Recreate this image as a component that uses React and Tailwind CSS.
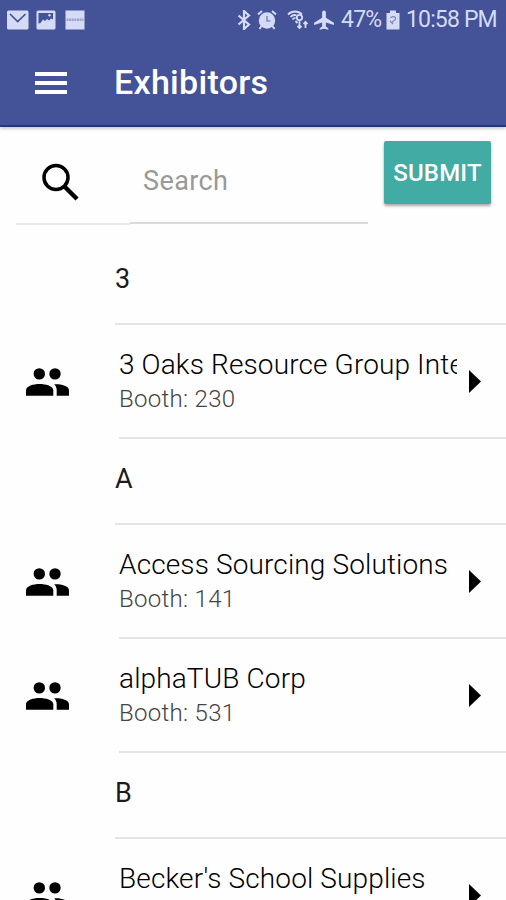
import React, { useState } from "react";

/* ================= DATA ================= */

const groups = [
  {
    letter: "3",
    items: [{ name: "3 Oaks Resource Group International", booth: "230" }],
  },
  {
    letter: "A",
    items: [
      { name: "Access Sourcing Solutions", booth: "141" },
      { name: "alphaTUB Corp", booth: "531" },
    ],
  },
  {
    letter: "B",
    items: [{ name: "Becker's School Supplies" }],
  },
];

/* ================= STATUS BAR ================= */

function StatusBar() {
  return (
    <div className="h-10 flex items-center text-[#d5dbf5]">
      <svg className="ml-[7px] w-[22px] h-5" viewBox="0 0 22 20">
        <rect x="0" y="0.5" width="21.5" height="19" rx="1.5" fill="currentColor" />
        <path d="M3 4l7.7 7.5L18.5 4" fill="none" stroke="#445298" strokeWidth="1.7" />
      </svg>
      <svg className="ml-[7px] w-5 h-5" viewBox="0 0 20 20">
        <rect x="0.5" y="0.5" width="19" height="19" rx="1.5" fill="currentColor" />
        <path
          d="M2.5 3h14.5v6.5l-2-1-2 2-2-1.5-2 2-2-1.5-2.5 3.5-2 .5z"
          fill="#445298"
        />
        <circle cx="13.5" cy="5.3" r="1.2" fill="currentColor" />
      </svg>
      <svg className="ml-[9px] w-5 h-5" viewBox="0 0 20 20">
        <rect x="0.5" y="0.5" width="19" height="19" fill="currentColor" />
        <path d="M1.5 9.7h17" stroke="#9ba1c8" strokeWidth="2.5" strokeDasharray="2 0.6" />
      </svg>

      <svg className="ml-[152px] w-[14px] h-5 shrink-0" viewBox="0 0 14 20">
        <path
          d="M1.5 5.5l10.5 9-5 4.5V1l5 4.500-10.500 9"
          fill="none"
          stroke="currentColor"
          strokeWidth="2.2"
        />
      </svg>
      <svg className="ml-[6px] w-5 h-5 shrink-0" viewBox="0 0 20 20">
        <circle cx="10" cy="10.5" r="8.2" fill="currentColor" />
        <path
          d="M1 4.5L5 1M19 4.5L15 1M4.5 16l-2 3M15.5 16l2 3"
          stroke="currentColor"
          strokeWidth="2"
        />
        <path d="M10 6v5h3.500" fill="none" stroke="#6470ab" strokeWidth="1.2" />
      </svg>
      <svg className="ml-[10px] w-[22px] h-5 shrink-0" viewBox="0 0 22 20">
        <g fill="none" stroke="currentColor" strokeWidth="1.8">
          <path d="M1 4.5c4-4 10-4 14 0M3.5 7c2-2.2 4-2.5 6-1.5M5.5 9.5c1-1.2 2-1.5 3-1.2" />
          <circle cx="12.5" cy="7.5" r="2.7" />
          <path d="M8.5 11l2 2M12.5 11v7M10.5 16l2 2 2-2M18.5 18v-6M16.5 14l2-2.2 2 2.2" />
        </g>
      </svg>
      <svg className="ml-[4px] w-[22px] h-5 shrink-0" viewBox="0 0 22 20">
        <path
          d="M11 .5c1.200 0 1.900 1 1.900 2.200v5l8 5v2.300l-8-2.500v4l2.400 1.800v1.500L11 18.700l-4.300 1.100v-1.500l2.400-1.800v-4l-8 2.500v-2.300l8-5v-5C9.100 1.500 9.800.5 11 .5z"
          fill="currentColor"
        />
      </svg>
      <span className="ml-[6px] mt-px w-[39px] text-[23px] tracking-[-0.8px]">47%</span>
      <svg className="ml-[6px] w-[14px] h-5 shrink-0" viewBox="0 0 14 20">
        <path d="M4 .5h6V3h3.5v16.5H.5V3H4z" fill="currentColor" />
        <path d="M4.500 8c1-2 5-2 5 0.500s-3 2-3 4M4 11l3 3" fill="none" stroke="#8088a8" strokeWidth="1.3" />
      </svg>
      <span className="ml-[6px] mt-px text-[23px] tracking-[-0.85px] whitespace-nowrap">
        10:58 PM
      </span>
    </div>
  );
}

/* ================= ROWS ================= */

function PeopleIcon() {
  return (
    <svg className="w-[43px] h-7" viewBox="0 0 43 28">
      <circle cx="13.3" cy="5.9" r="5.7" />
      <circle cx="29" cy="5.9" r="5.7" />
      <path d="M0 27.7v-5.5C0 18 7.5 16 13.6 16s13.7 2 13.7 6.200v5.5z" />
      <path d="M28.2 16.4C34.5 16 43 18 43 22.2v5.5H30.7v-5.5c0-2.5-.9-4.5-2.5-5.8z" />
    </svg>
  );
}

function ExhibitorRow({ name, booth }) {
  return (
    <div className="h-[114px] flex shrink-0">
      <div className="w-[119px] pl-[26px] pt-[43px]">
        <PeopleIcon />
      </div>
      <div className="flex-1 min-w-0 flex border-b-2 border-[#e4e4e4]">
        <div className="w-[338px] pt-[22px] overflow-hidden whitespace-nowrap">
          <p className="text-[28px] leading-9 font-light tracking-[0.13px] text-black">{name}</p>
          {booth && (
            <p className="text-[24px] leading-8 font-light tracking-[0.3px] text-[#444]">
              Booth: {booth}
            </p>
          )}
        </div>
        <svg className="ml-3 mt-[45px] w-3 h-[23px]" viewBox="0 0 12 23">
          <path d="M0 0l12 11.5L0 23z" />
        </svg>
      </div>
    </div>
  );
}

export default function App() {
  const [search, setSearch] = useState("");

  return (
    <div className="w-[506px] h-[900px] overflow-hidden flex flex-col bg-[#fefefe] font-['Roboto',sans-serif]">
      {/* ===== HEADER ===== */}
      <div className="h-[127px] shrink-0 bg-[#445298] border-b-2 border-[#24367e] shadow-[0_2px_3px_rgba(0,0,0,0.2)]">
        <StatusBar />
        <div className="h-[85px] flex items-center">
          <button className="ml-[35px] mt-px w-[32px] flex flex-col gap-[5px]">
            <span className="h-[4px] bg-white" />
            <span className="h-[4px] bg-white" />
            <span className="h-[4px] bg-white" />
          </button>
          <h1 className="ml-[47px] text-[34px] font-medium tracking-[0.3px] text-white">Exhibitors</h1>
        </div>
      </div>

      {/* ===== SEARCH ===== */}
      <div className="h-[112px] shrink-0 flex items-start">
        <div className="ml-4 w-[114px] h-[98px] pl-[25px] pt-[36px] border-b-2 border-[#e9e9e9]">
          <svg className="w-[38px] h-[38px]" viewBox="0 0 38 38">
            <g fill="none" stroke="#000" strokeWidth="3.5">
              <circle cx="15" cy="14.5" r="12" />
              <path d="M23.5 23.5L36 36" strokeWidth="4.4" />
            </g>
          </svg>
        </div>
        <input
          className="w-[238px] h-[97px] pl-[13px] pt-[13px] text-[27px] tracking-[0.4px] text-black placeholder:text-[#999] border-b-2 border-[#dadada] outline-none"
          placeholder="Search"
          value={search}
          onChange={(e) => setSearch(e.target.value)}
        />
        <button className="ml-4 mt-[14px] w-[107px] h-[63px] rounded-xs bg-[#42aba3] text-white text-[24px] font-medium tracking-[0.2px] shadow-[0_2px_3px_rgba(0,0,0,0.35)]">
          SUBMIT
        </button>
      </div>

      {/* ===== EXHIBITORS ===== */}
      {groups.map((group) => (
        <React.Fragment key={group.letter}>
          <div className="ml-[115px] h-[86px] pb-[3px] shrink-0 flex items-center border-b-2 border-[#e4e4e4] text-[27px] text-[#1c1c1c]">
            {group.letter}
          </div>
          {group.items.map((item) => (
            <ExhibitorRow key={item.name} name={item.name} booth={item.booth} />
          ))}
        </React.Fragment>
      ))}
    </div>
  );
}
